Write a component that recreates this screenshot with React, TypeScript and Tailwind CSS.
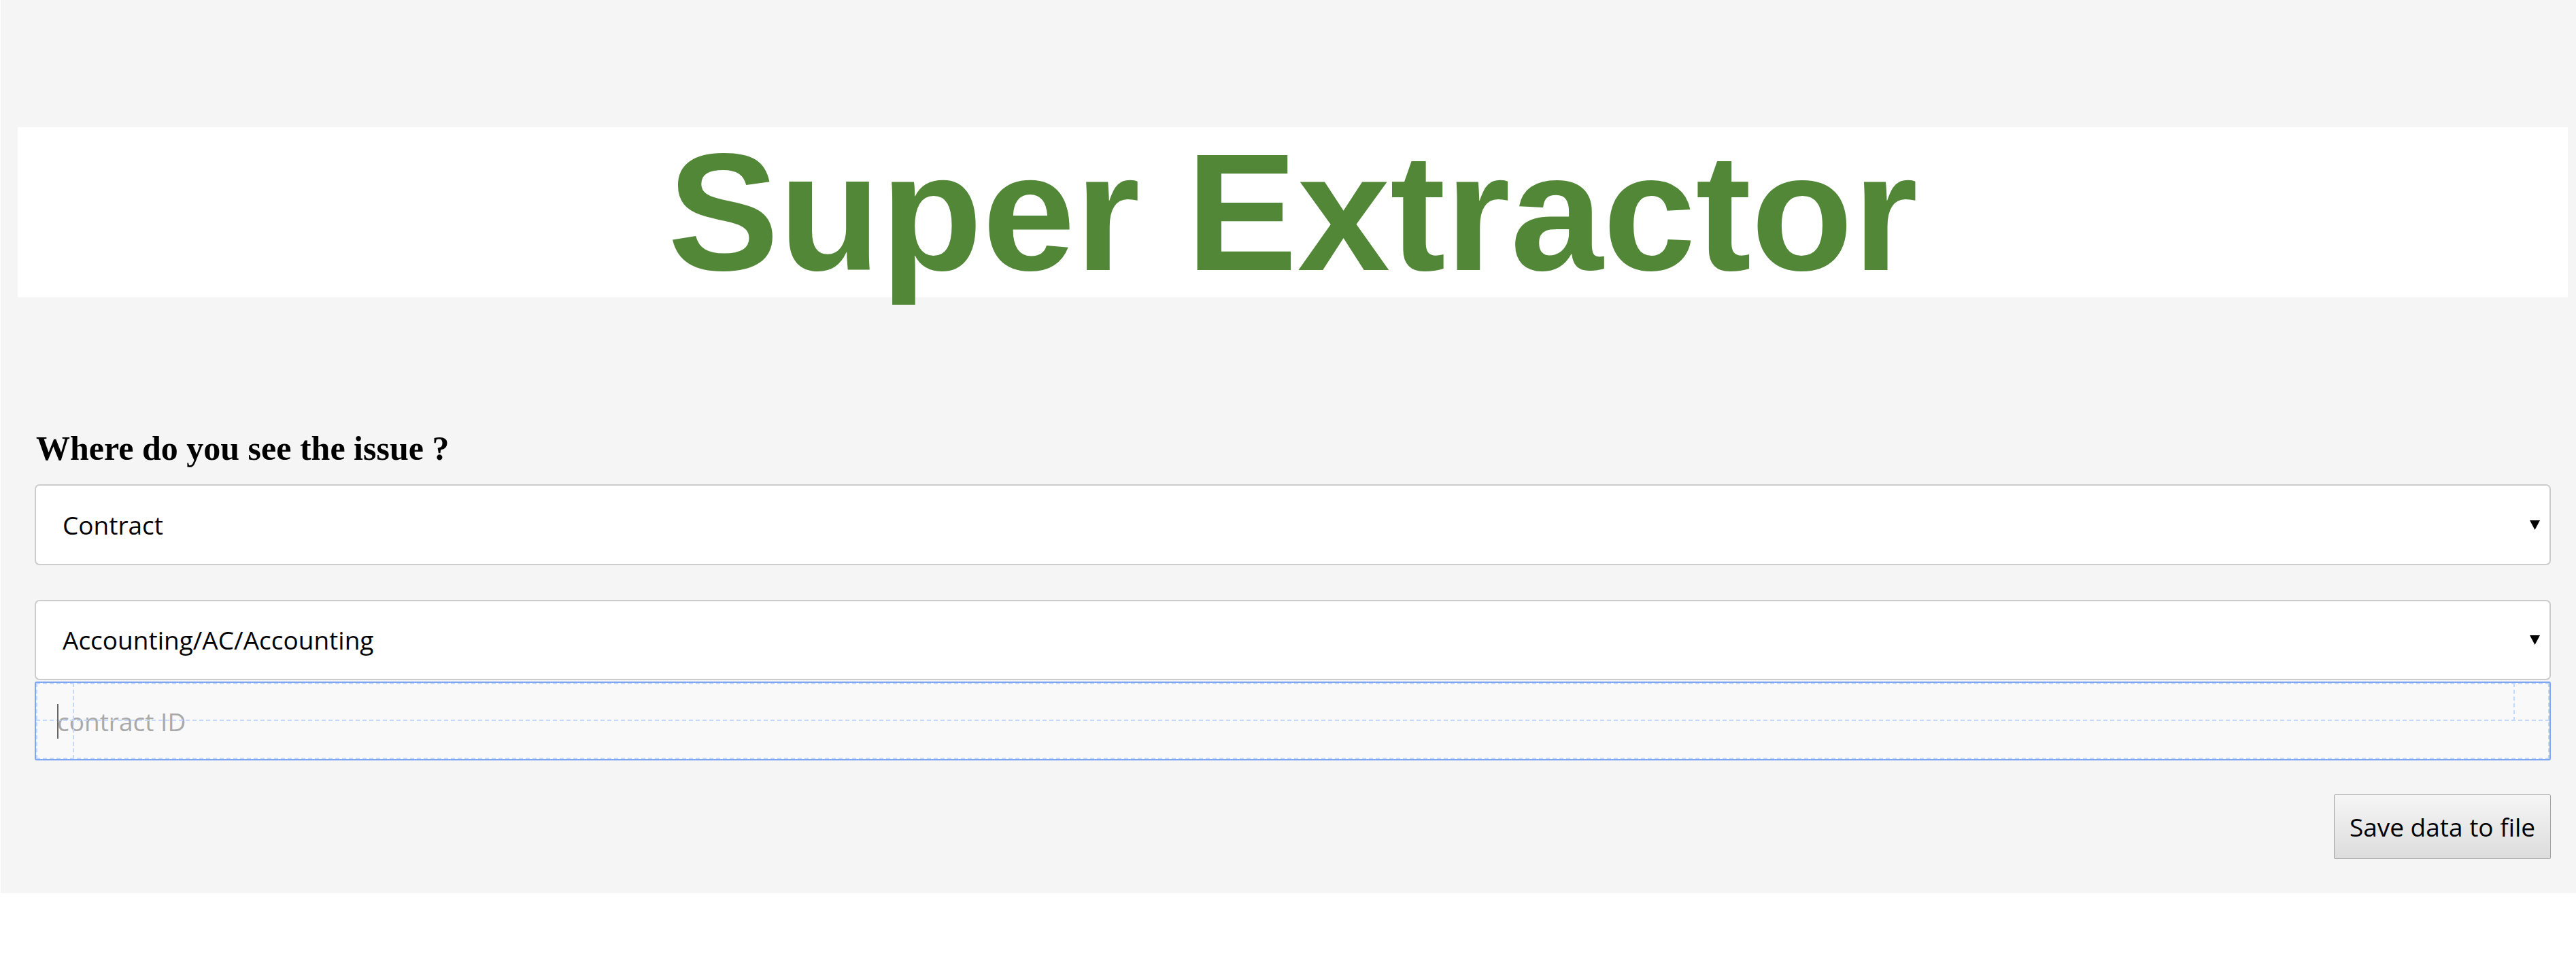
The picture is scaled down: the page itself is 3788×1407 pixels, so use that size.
import { useState } from "react";

const categories = ["Contract", "Invoice", "Customer"];
const departments = ["Accounting/AC/Accounting", "Sales/SA/Sales", "Legal/LE/Legal"];

const Arrow = () => (
  <svg
    className="pointer-events-none absolute right-[16px] top-1/2 -translate-y-1/2"
    width="15"
    height="14"
    viewBox="0 0 15 14"
  >
    <polygon points="0,0 15,0 7.5,14" fill="#000" />
  </svg>
);

const App = () => {
  const [category, setCategory] = useState(categories[0]);
  const [department, setDepartment] = useState(departments[0]);
  const [contractId, setContractId] = useState("");

  return (
    <div className="min-h-screen bg-white">
      <div className="ml-px bg-[#f5f5f5] pt-[187px] pb-[50px] pl-[25px] pr-[12px]">
        <div className="h-[250px] bg-white text-center">
          <h1 className="font-['Liberation_Sans',Arial,sans-serif] text-[245px] leading-[250px] font-bold text-[#518736]">
            Super Extractor
          </h1>
        </div>

        <div className="mt-[195px] flex flex-col px-[25px]">
          <h3 className="pl-[2px] font-['Liberation_Serif','Times_New_Roman',serif] text-[50px] leading-[54px] font-bold text-black">
            Where do you see the issue ?
          </h3>

          <div className="relative mt-[26px]">
            <select
              value={category}
              onChange={(e) => setCategory(e.target.value)}
              className="block h-[119px] w-full appearance-none rounded-[7px] border-2 border-[#cccccc] bg-white pl-[39px] font-['Open_Sans',sans-serif] text-[37px] text-black outline-none"
            >
              {categories.map((c) => (
                <option key={c} value={c}>
                  {c}
                </option>
              ))}
            </select>
            <Arrow />
          </div>

          <div className="relative mt-[51px]">
            <select
              value={department}
              onChange={(e) => setDepartment(e.target.value)}
              className="block h-[118px] w-full appearance-none rounded-[7px] border-2 border-[#cccccc] bg-white pl-[39px] font-['Open_Sans',sans-serif] text-[37px] text-black outline-none"
            >
              {departments.map((d) => (
                <option key={d} value={d}>
                  {d}
                </option>
              ))}
            </select>
            <Arrow />
          </div>

          <div className="relative mt-[2px]">
            <input
              value={contractId}
              onChange={(e) => setContractId(e.target.value)}
              placeholder="contract ID"
              className="block h-[116px] w-full rounded-[3px] border-2 border-[#7ea6f2] bg-[#f9f9f9] pl-[31px] font-['Open_Sans',sans-serif] text-[37px] text-black outline-none placeholder:text-[#a9a9a9]"
            />
            {/* inspector overlay */}
            <div className="pointer-events-none absolute inset-[2px] border-2 border-dashed border-[#c4d8fa]" />
            <div className="pointer-events-none absolute left-[2px] right-[2px] top-[56px] border-t-2 border-dashed border-[#c4d8fa]" />
            <div className="pointer-events-none absolute bottom-[2px] left-[56px] top-[2px] border-l-2 border-dashed border-[#c4d8fa]" />
            <div className="pointer-events-none absolute right-[53px] top-[2px] h-[56px] border-l-2 border-dashed border-[#c4d8fa]" />
            <div className="pointer-events-none absolute left-[33px] top-[33px] h-[51px] w-[2px] bg-[#666666]" />
          </div>

          <button className="mt-[50px] h-[95px] w-[319px] self-end rounded-[2px] border border-[#a3a3a3] bg-gradient-to-b from-[#f6f6f6] to-[#dcdcdc] font-['Open_Sans',sans-serif] text-[37px] text-black">
            Save data to file
          </button>
        </div>
      </div>
    </div>
  );
};

export default App;
